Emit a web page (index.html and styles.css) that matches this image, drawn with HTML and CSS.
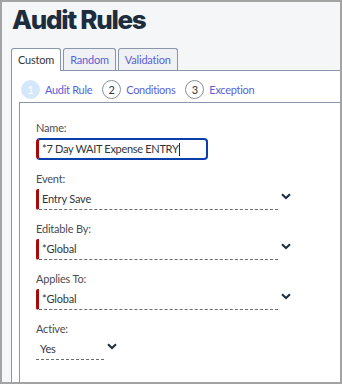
FILE: index.html
```html
<!DOCTYPE html>
<html lang="en">
<head>
  <meta charset="UTF-8" />
  <title>Audit Rules</title>
  <link rel="stylesheet" href="styles.css">
</head>
<body>
  <div class="frame">
    <h1>Audit Rules</h1>

    <div class="tabs">
      <div class="tab ativo">Custom</div>
      <div class="tab">Random</div>
      <div class="tab">Validation</div>
    </div>

    <div class="painel">
      <div class="passos">
        <div class="passo atual"><span class="num">1</span>Audit Rule</div>
        <div class="passo"><span class="num">2</span>Conditions</div>
        <div class="passo"><span class="num">3</span>Exception</div>
      </div>

      <div class="form">
        <div class="campo">
          <label>Name:</label>
          <div class="entrada">*7 Day WAIT Expense ENTRY<span class="cursor"></span></div>
        </div>

        <div class="campo">
          <label>Event:</label>
          <div class="linha">
            <div class="selecao obrigatorio">Entry Save</div>
            <svg class="seta" width="10" height="7" viewBox="0 0 10 7"><path d="M1 1.2 L5 5 L9 1.2" fill="none" stroke="#1d2d3e" stroke-width="2"/></svg>
          </div>
        </div>

        <div class="campo">
          <label>Editable By:</label>
          <div class="linha">
            <div class="selecao obrigatorio">*Global</div>
            <svg class="seta" width="10" height="7" viewBox="0 0 10 7"><path d="M1 1.2 L5 5 L9 1.2" fill="none" stroke="#1d2d3e" stroke-width="2"/></svg>
          </div>
        </div>

        <div class="campo">
          <label>Applies To:</label>
          <div class="linha">
            <div class="selecao obrigatorio">*Global</div>
            <svg class="seta" width="10" height="7" viewBox="0 0 10 7"><path d="M1 1.2 L5 5 L9 1.2" fill="none" stroke="#1d2d3e" stroke-width="2"/></svg>
          </div>
        </div>

        <div class="campo">
          <label>Active:</label>
          <div class="linha">
            <div class="selecao curta">Yes</div>
            <svg class="seta" width="10" height="7" viewBox="0 0 10 7"><path d="M1 1.2 L5 5 L9 1.2" fill="none" stroke="#1d2d3e" stroke-width="2"/></svg>
          </div>
        </div>
      </div>
    </div>
  </div>
</body>
</html>
```

FILE: styles.css
```css
body {
  margin: 0;
  font-family: Lato, "Liberation Sans", Arial, sans-serif;
}

.frame {
  width: 342px;
  height: 384px;
  box-sizing: border-box;
  border: 2px solid #a3a3a3;
  background-color: #f5f6f7;
  padding-left: 9px;
  display: flex;
  flex-direction: column;
  overflow: hidden;
}

h1 {
  margin: 0;
  padding: 1px 0 0 1px;
  font-family: Inter, sans-serif;
  font-weight: 800;
  font-size: 26px;
  line-height: 34px;
  letter-spacing: -1.3px;
  color: #1d2d3e;
}

.tabs {
  display: flex;
  gap: 2px;
  margin-top: 11px;
  position: relative;
  z-index: 1;
}

.tab {
  height: 21px;
  padding: 0 6px;
  border: 1px solid #8796ab;
  border-bottom: none;
  border-radius: 3px 3px 0 0;
  background-color: #eff1f4;
  color: #5b5fd8;
  font-size: 11px;
  letter-spacing: -0.2px;
  line-height: 22px;
  white-space: nowrap;
}

.tab.ativo {
  background-color: #ffffff;
  color: #32363a;
  height: 22px;
  margin-bottom: -1px;
}

.painel {
  flex: 1;
  background-color: #ffffff;
  border-top: 1px solid #8796ab;
  border-left: 1px solid #8796ab;
  padding-left: 7px;
  display: flex;
  flex-direction: column;
}

.passos {
  display: flex;
  gap: 10px;
  height: 31px;
  align-items: center;
  padding: 5px 0 0 2px;
  box-sizing: border-box;
}

.passo {
  display: flex;
  align-items: center;
  gap: 5px;
  color: #5b5fd8;
  font-size: 11px;
  letter-spacing: -0.3px;
  white-space: nowrap;
}

.num {
  width: 17px;
  height: 17px;
  border: 1px solid #8a9099;
  border-radius: 50%;
  display: flex;
  align-items: center;
  justify-content: center;
  color: #32363a;
  font-size: 11px;
  letter-spacing: 0;
}

.passo.atual .num {
  background-color: #d5e8fb;
  border-color: #d5e8fb;
  color: #ffffff;
}

.form {
  flex: 1;
  border-top: 1px solid #8796ab;
  border-left: 1px solid #8796ab;
  padding: 17px 0 0 16px;
}

.campo {
  margin-bottom: 11px;
}

.campo label {
  display: block;
  height: 16px;
  line-height: 16px;
  font-size: 11px;
  letter-spacing: -0.2px;
  color: #4a4d52;
  margin-bottom: 2px;
}

.entrada {
  width: 172px;
  height: 22px;
  box-sizing: border-box;
  border: 2px solid #0a3ea8;
  border-left: 3px solid #a80a0a;
  border-radius: 4px;
  padding-left: 3px;
  font-size: 11px;
  letter-spacing: -0.3px;
  line-height: 18px;
  color: #32363a;
  display: flex;
  align-items: center;
  white-space: nowrap;
}

.cursor {
  width: 1px;
  height: 13px;
  background-color: #1d2d3e;
  margin-left: 1px;
}

.linha {
  display: flex;
  align-items: flex-start;
}

.selecao {
  width: 242px;
  height: 21px;
  box-sizing: border-box;
  border-bottom: 1px dashed #6a6d70;
  padding-left: 6px;
  font-size: 11px;
  letter-spacing: -0.2px;
  line-height: 20px;
  color: #32363a;
  white-space: nowrap;
}

.selecao.obrigatorio {
  border-left: 3px solid #a80a0a;
  border-radius: 2px 0 0 2px;
  padding-left: 3px;
}

.selecao.curta {
  width: 68px;
  padding-left: 4px;
}

.seta {
  margin: 4px 0 0 3px;
}
```
